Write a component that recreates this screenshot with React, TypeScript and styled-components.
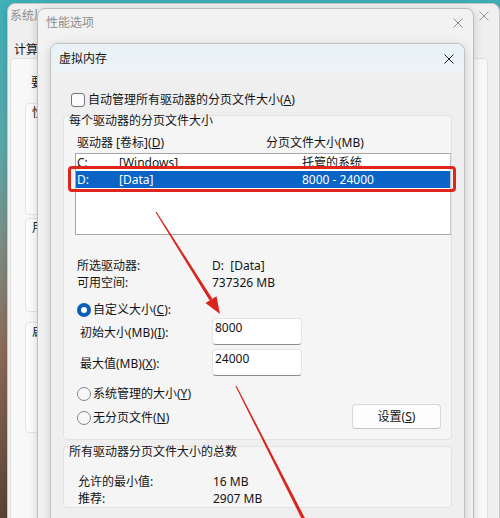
import React from "react";
import styled, { createGlobalStyle } from "styled-components";

const GlobalStyle = createGlobalStyle`
  html, body { margin: 0; padding: 0; background: #ffffff; }
  body { font-family: "Noto Sans", "Noto Sans CJK SC", sans-serif; }
  * { box-sizing: border-box; }
`;

const Desktop = styled.div`
  position: relative;
  width: 500px;
  height: 518px;
  overflow: hidden;
  background: linear-gradient(180deg, #3fb2ba 0%, #5aa9ab 28%, #7f8d84 48%, #8c6b57 68%, #5c4336 100%);
  font-family: "Noto Sans", "Noto Sans CJK SC", sans-serif;
  font-size: 12px;
  color: #141414;
`;

const Window = styled.div<{ $x: number; $y: number; $w: number; $bg: string; $border: string }>`
  position: absolute;
  left: ${(p) => p.$x}px;
  top: ${(p) => p.$y}px;
  width: ${(p) => p.$w}px;
  bottom: -14px;
  border: 1px solid ${(p) => p.$border};
  border-radius: 8px;
  background: ${(p) => p.$bg};
  box-shadow: 0 2px 10px rgba(0, 0, 0, 0.16);
  display: flex;
  flex-direction: column;
  overflow: hidden;
`;

const TitleBar = styled.div<{ $h: number; $pl: number; $pr: number; $bg?: string; $inactive?: boolean }>`
  flex: none;
  height: ${(p) => p.$h}px;
  padding: 0 ${(p) => p.$pr}px 0 ${(p) => p.$pl}px;
  display: flex;
  align-items: center;
  justify-content: space-between;
  background: ${(p) => p.$bg ?? "transparent"};
  color: ${(p) => (p.$inactive ? "#8e8e8e" : "#141414")};
  line-height: 16px;
`;

/* text of the back window, clipped where the front window covers it */
const Clip = styled.span<{ $w: number }>`
  display: inline-block;
  width: ${(p) => p.$w}px;
  overflow: hidden;
  white-space: nowrap;
  vertical-align: top;
`;

const CloseSvg = styled.svg`
  display: block;
  flex: none;
`;

const CloseGlyph: React.FC<{ color: string }> = ({ color }) => (
  <CloseSvg width="10" height="10" viewBox="0 0 10 10">
    <path d="M0.5 0.5 L9.5 9.5 M9.5 0.5 L0.5 9.5" stroke={color} strokeWidth="1" fill="none" />
  </CloseSvg>
);

/* ---------- window 1 : 系统属性 ---------- */
const TabStrip = styled.div`
  flex: none;
  margin-top: 14px;
  padding-left: 6px;
  display: flex;
  line-height: 16px;
  color: #141414;
`;

const TabPage = styled.div`
  flex: 1;
  margin: 0 11px 0 2px;
  background: #f8f8f8;
  border: 1px solid #e0e0e0;
  border-radius: 4px;
  display: flex;
  flex-direction: column;
`;

const Notice = styled.div`
  margin-top: 16px;
  padding-left: 20px;
  line-height: 16px;
  white-space: nowrap;
`;

const SysGroup = styled.div<{ $h: number; $mt: number }>`
  flex: none;
  height: ${(p) => p.$h}px;
  margin: ${(p) => p.$mt}px 14px 0 14px;
  background: #fbfbfb;
  border: 1px solid #e4e4e4;
  border-radius: 4px;
  padding: 2px 0 0 6px;
  line-height: 14px;
`;

/* ---------- window 3 : 虚拟内存 ---------- */
const Body = styled.div`
  flex: 1;
  padding: 0 12px;
  display: flex;
  flex-direction: column;
`;

const CheckRow = styled.label`
  margin-top: 20px;
  height: 14px;
  padding-left: 8px;
  display: flex;
  align-items: center;
  gap: 3px;
  line-height: 14px;
  white-space: nowrap;
`;

const CheckBox = styled.span`
  width: 14px;
  height: 14px;
  flex: none;
  border: 1px solid #777777;
  border-radius: 3px;
  background: #fbfbfb;
`;

const Group = styled.div<{ $mt: number }>`
  margin-top: ${(p) => p.$mt}px;
  background: #f5f5f5;
  border: 1px solid #e2e2e2;
  border-radius: 4px;
  display: flex;
  flex-direction: column;
`;

const GroupLabel = styled.div`
  margin-top: -2px;
  padding-left: 5px;
  line-height: 14px;
  white-space: nowrap;
`;

const HeaderRow = styled.div`
  margin-top: 7px;
  padding-left: 13px;
  display: grid;
  grid-template-columns: 189px 1fr;
  line-height: 16px;
  white-space: nowrap;
`;

const ListBox = styled.div`
  position: relative;
  margin: 2px 0 0 11px;
  height: 82px;
  background: #ffffff;
  border: 1px solid #a8a8a8;
  border-right-color: #c8c8c8;
`;

const ListRow = styled.div<{ $selected?: boolean }>`
  height: 17px;
  padding-left: 1px;
  display: grid;
  grid-template-columns: 42px 183px 1fr;
  align-items: center;
  line-height: 17px;
  white-space: nowrap;
  background: ${(p) => (p.$selected ? "#0a64c6" : "transparent")};
  color: ${(p) => (p.$selected ? "#ffffff" : "#141414")};
`;

const Highlight = styled.div`
  position: absolute;
  left: -8px;
  top: 12px;
  width: 388px;
  height: 26px;
  border: 3px solid #e0251d;
  border-radius: 4px;
  pointer-events: none;
`;

const InfoGrid = styled.div<{ $mt: number; $pl: number; $col: number }>`
  margin-top: ${(p) => p.$mt}px;
  padding-left: ${(p) => p.$pl}px;
  display: grid;
  grid-template-columns: ${(p) => p.$col}px 1fr;
  line-height: 17px;
  white-space: nowrap;
`;

const RadioRow = styled.div<{ $mt: number }>`
  margin-top: ${(p) => p.$mt}px;
  height: 14px;
  display: flex;
  align-items: center;
  gap: 2px;
  line-height: 14px;
  white-space: nowrap;
`;

const Radio = styled.span<{ $checked?: boolean }>`
  width: 14px;
  height: 14px;
  flex: none;
  border-radius: 50%;
  display: flex;
  align-items: center;
  justify-content: center;
  background: ${(p) => (p.$checked ? "#0a5fb6" : "#f7f7f7")};
  border: ${(p) => (p.$checked ? "none" : "1px solid #858585")};
  &::after {
    content: "";
    display: ${(p) => (p.$checked ? "block" : "none")};
    width: 6px;
    height: 6px;
    border-radius: 50%;
    background: #ffffff;
  }
`;

const CustomBlock = styled.div`
  margin-top: 12px;
  padding-left: 13px;
  display: flex;
  flex-direction: column;
`;

const SizeRow = styled.div<{ $mt: number }>`
  margin-top: ${(p) => p.$mt}px;
  padding-left: 3px;
  display: grid;
  grid-template-columns: 132px 90px;
  align-items: center;
  white-space: nowrap;
`;

const SizeInput = styled.div`
  height: 27px;
  padding: 0 2px;
  background: #ffffff;
  border: 1px solid #e4e4e4;
  border-bottom: 1px solid #8c8c8c;
  border-radius: 4px;
  line-height: 17px;
`;

const BottomRow = styled.div`
  margin-top: 10px;
  padding: 0 10px 10px 13px;
  display: flex;
  justify-content: space-between;
  align-items: flex-start;
`;

const RadioCol = styled.div`
  display: flex;
  flex-direction: column;
  padding-top: 1px;
`;

const Button = styled.div`
  margin-top: 18px;
  width: 89px;
  height: 25px;
  display: flex;
  align-items: center;
  justify-content: center;
  background: #fdfdfd;
  border: 1px solid #d9d9d9;
  border-bottom-color: #c4c4c4;
  border-radius: 4px;
  line-height: 16px;
`;

const Overlay = styled.svg`
  position: absolute;
  left: 0;
  top: 0;
  pointer-events: none;
`;

export default function App() {
  return (
    <>
      <GlobalStyle />
      <Desktop>
        <Window $x={7} $y={3} $w={493} $bg="#efefef" $border="#c6c6c6">
          <TitleBar $h={24} $pl={2} $pr={10} $inactive>
            <Clip $w={27}>系统属性</Clip>
            <CloseGlyph color="#9a9a9a" />
          </TitleBar>
          <TabStrip>
            <Clip $w={23}>计算机名</Clip>
          </TabStrip>
          <TabPage>
            <Notice>
              <Clip $w={6}>要进行大多数更改，你必须作为管理员登录。</Clip>
            </Notice>
            <SysGroup $h={112} $mt={12}>
              <Clip $w={6}>性能</Clip>
            </SysGroup>
            <SysGroup $h={94} $mt={3}>
              <Clip $w={6}>用户配置文件</Clip>
            </SysGroup>
            <SysGroup $h={111} $mt={10}>
              <Clip $w={6}>启动和故障恢复</Clip>
            </SysGroup>
          </TabPage>
        </Window>

        <Window $x={37} $y={8} $w={437} $bg="#f2f2f2" $border="#bdbdbd">
          <TitleBar $h={28} $pl={8} $pr={10} $inactive>
            <span>性能选项</span>
            <CloseGlyph color="#8a8a8a" />
          </TitleBar>
        </Window>

        <Window $x={50} $y={43} $w={415} $bg="#efefef" $border="#c2c2c2">
          <TitleBar $h={29} $pl={8} $pr={10} $bg="linear-gradient(180deg, #e8f2f7 0%, #edf3f6 100%)">
            <span>虚拟内存</span>
            <CloseGlyph color="#1f1f1f" />
          </TitleBar>
          <Body>
            <CheckRow>
              <CheckBox />
              <span>
                自动管理所有驱动器的分页文件大小(<u>A</u>)
              </span>
            </CheckRow>

            <Group $mt={8}>
              <GroupLabel>每个驱动器的分页文件大小</GroupLabel>
              <HeaderRow>
                <span>
                  驱动器 [卷标](<u>D</u>)
                </span>
                <span>分页文件大小(MB)</span>
              </HeaderRow>
              <ListBox>
                <ListRow>
                  <span>C:</span>
                  <span>[Windows]</span>
                  <span>托管的系统</span>
                </ListRow>
                <ListRow $selected>
                  <span>D:</span>
                  <span>[Data]</span>
                  <span>8000 - 24000</span>
                </ListRow>
                <Highlight />
              </ListBox>

              <InfoGrid $mt={22} $pl={13} $col={135}>
                <span>所选驱动器:</span>
                <span>D:&nbsp;&nbsp;[Data]</span>
                <span>可用空间:</span>
                <span>737326 MB</span>
              </InfoGrid>

              <CustomBlock>
                <RadioRow $mt={0}>
                  <Radio $checked />
                  <span>
                    自定义大小(<u>C</u>):
                  </span>
                </RadioRow>
                <SizeRow $mt={1}>
                  <span>
                    初始大小(MB)(<u>I</u>):
                  </span>
                  <SizeInput>8000</SizeInput>
                </SizeRow>
                <SizeRow $mt={4}>
                  <span>
                    最大值(MB)(<u>X</u>):
                  </span>
                  <SizeInput>24000</SizeInput>
                </SizeRow>
              </CustomBlock>

              <BottomRow>
                <RadioCol>
                  <RadioRow $mt={0}>
                    <Radio />
                    <span>
                      系统管理的大小(<u>Y</u>)
                    </span>
                  </RadioRow>
                  <RadioRow $mt={10}>
                    <Radio />
                    <span>
                      无分页文件(<u>N</u>)
                    </span>
                  </RadioRow>
                </RadioCol>
                <Button>
                  设置(<u>S</u>)
                </Button>
              </BottomRow>
            </Group>

            <Group $mt={6}>
              <GroupLabel>所有驱动器分页文件大小的总数</GroupLabel>
              <InfoGrid $mt={14} $pl={14} $col={135}>
                <span>允许的最小值:</span>
                <span>16 MB</span>
                <span>推荐:</span>
                <span>2907 MB</span>
              </InfoGrid>
            </Group>
          </Body>
        </Window>

        <Overlay width="500" height="518" viewBox="0 0 500 518">
          <g fill="#d8261c">
            <polygon points="156.5,211.7 212.4,298.7 209.6,300.5 155.5,212.3" />
            <polygon points="220,314 205.5,303.1 216.5,296.2" />
            <polygon points="236.5,385.7 314.6,536.8 311.4,538.4 235.5,386.3" />
          </g>
        </Overlay>
      </Desktop>
    </>
  );
}
